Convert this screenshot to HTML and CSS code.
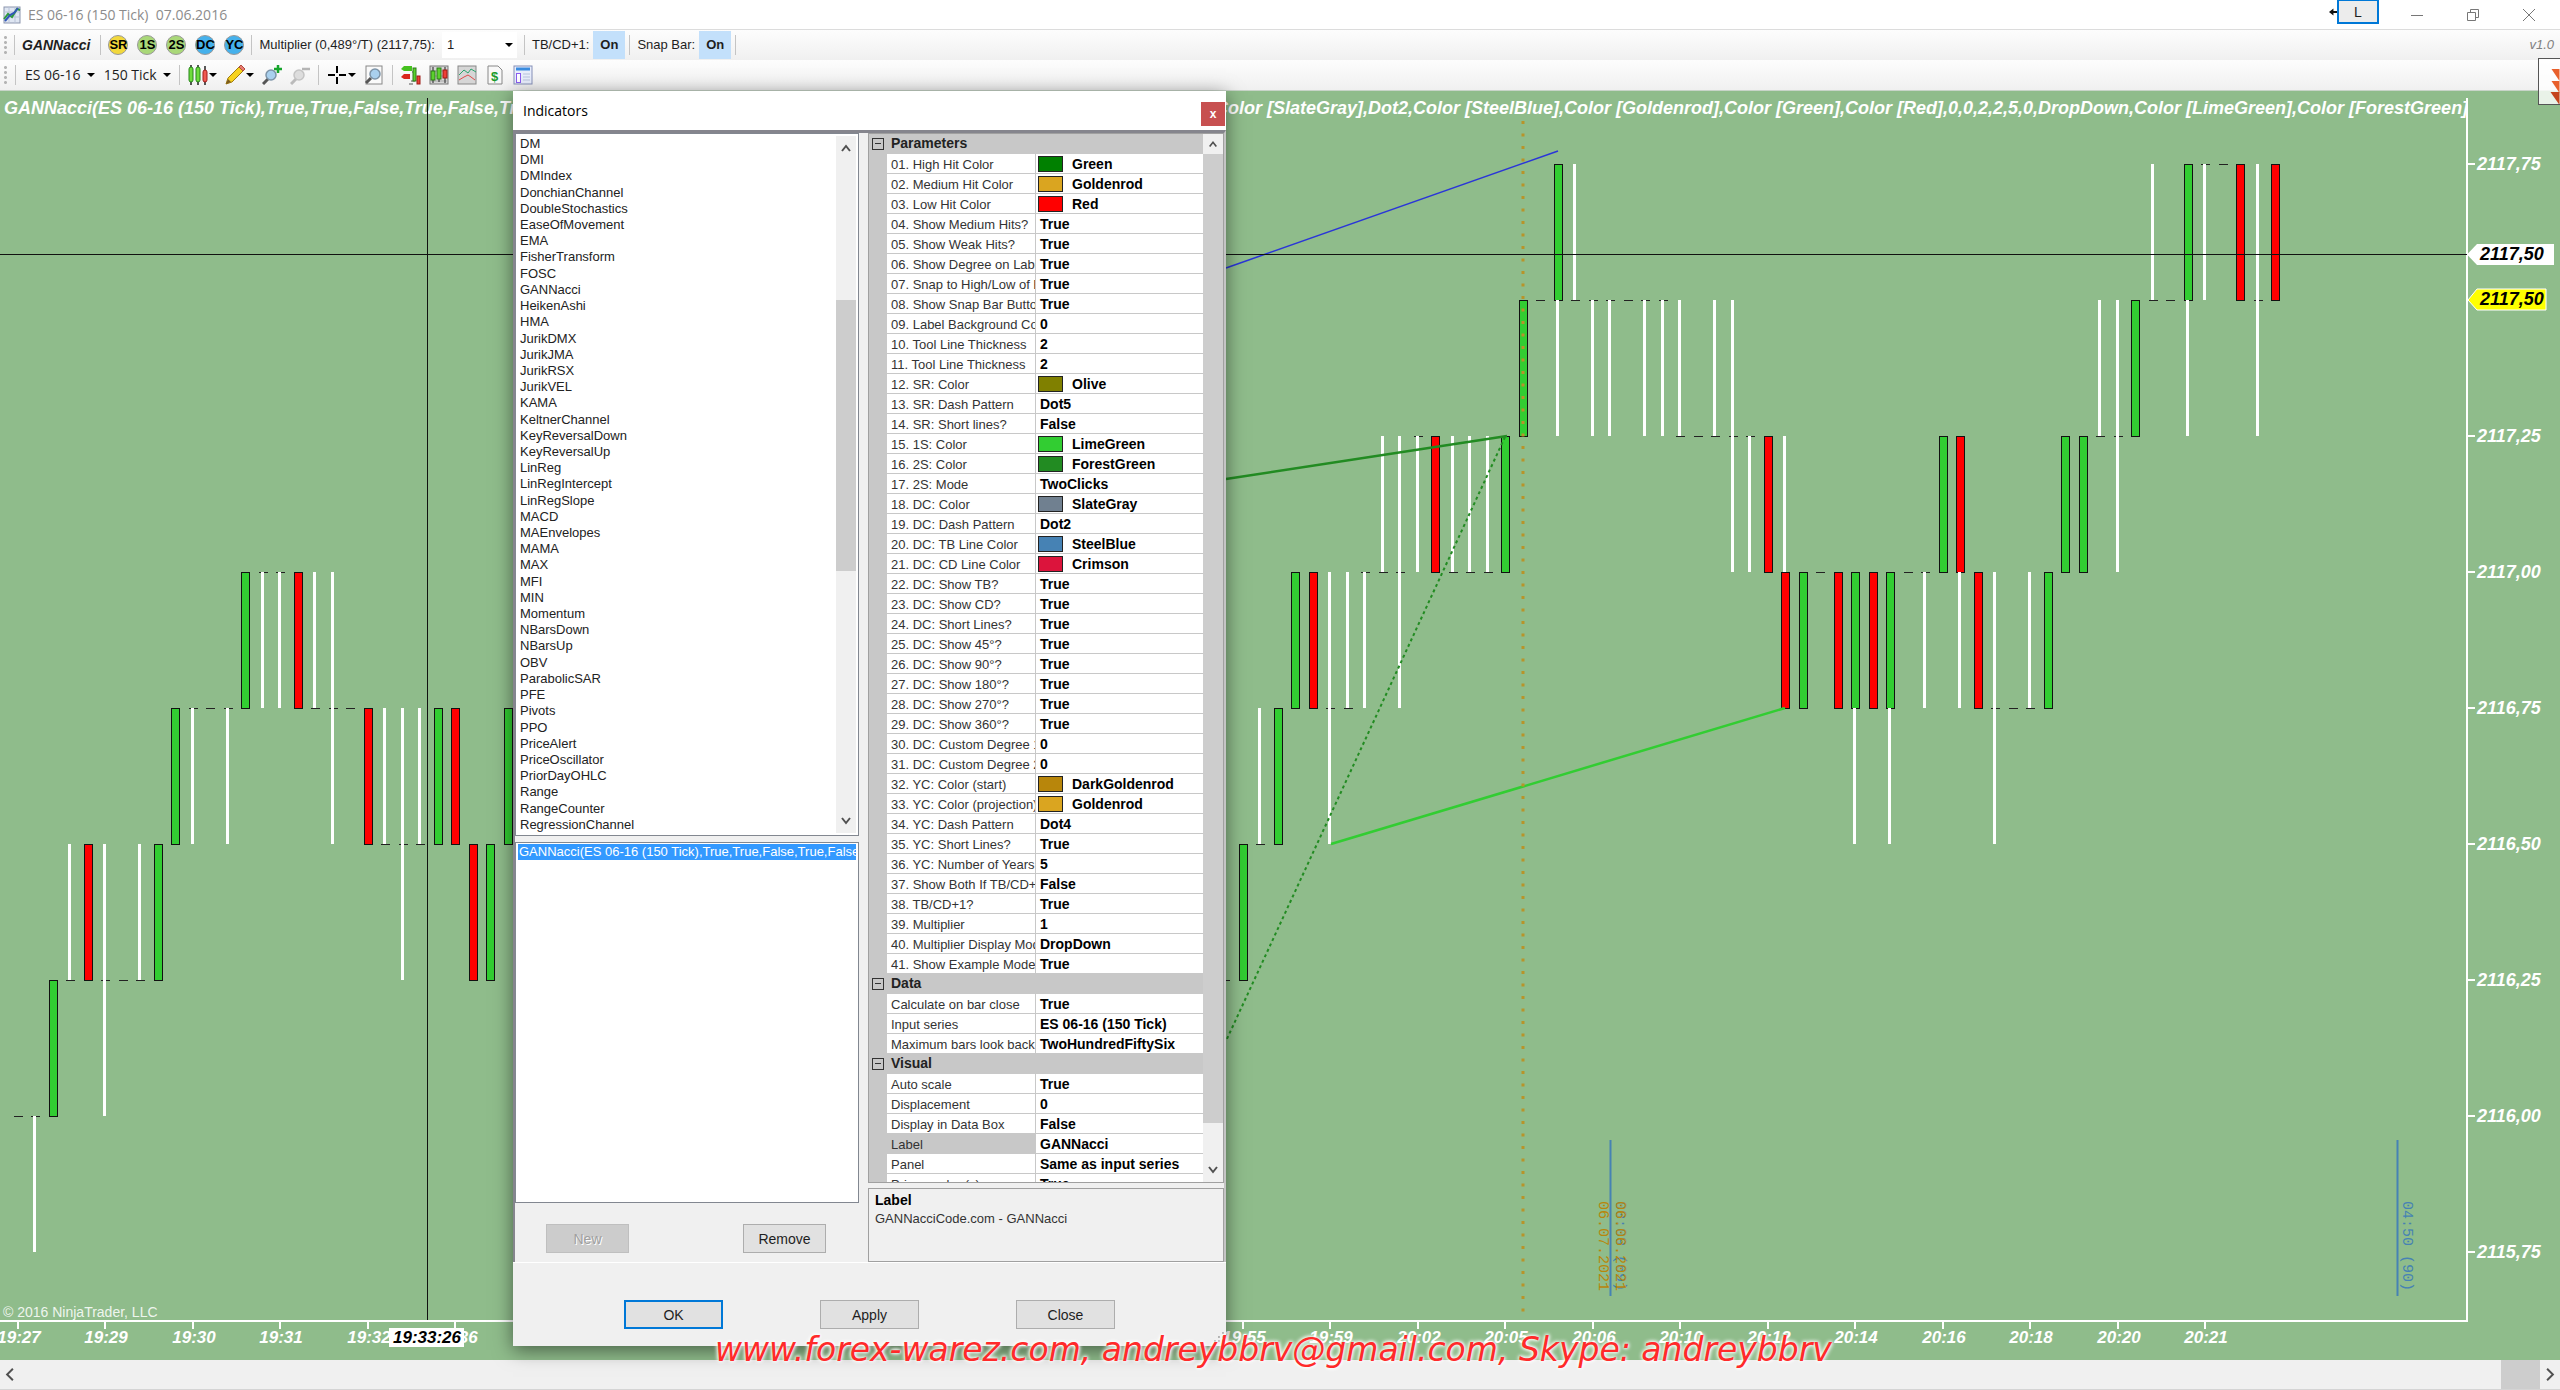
FILE: index.html
```html
<!DOCTYPE html>
<html lang="en">
<head>
<meta charset="utf-8">
<title>ES 06-16 (150 Tick) 07.06.2016</title>
<link rel="stylesheet" href="styles.css">
</head>
<body>
<header class="titlebar">
  <svg class="app-icon" viewBox="0 0 18 18"><rect x="1" y="1" width="16" height="16" fill="#dfe6f2" stroke="#8b95ad"/><path d="M1 6h16M1 11h16M6 1v16M12 1v16" stroke="#b9c3d8"/><path d="M1 13l4-5 4 3 5-8 3 1" fill="none" stroke="#2f9a3c" stroke-width="2"/><path d="M2 15l5-6 4-2 4-5" fill="none" stroke="#3157b8" stroke-width="2"/></svg>
  <h1 class="window-title">ES 06-16 (150 Tick)&nbsp; 07.06.2016</h1>
  <svg class="link-arrow" viewBox="0 0 9 10"><path d="M0 5l5-4v3h4v2H5v3z" fill="#111"/></svg>
  <button class="link-button" type="button">L</button>
  <div class="window-controls">
    <button type="button" aria-label="Minimize"><svg viewBox="0 0 14 14"><path d="M1 7.5h12" stroke="#777"/></svg></button>
    <button type="button" aria-label="Restore"><svg viewBox="0 0 14 14"><path d="M1.500 4.500h8v8h-8zM4.500 4.500v-3h8v8h-3" fill="none" stroke="#777"/></svg></button>
    <button type="button" aria-label="Close window"><svg viewBox="0 0 14 14"><path d="M1 1l12 12M13 1L1 13" stroke="#777"/></svg></button>
  </div>
</header>

<nav class="toolbar" aria-label="GANNacci">
  <span class="grip"></span><span class="sep"></span>
  <span class="brand">GANNacci</span>
  <span class="sep"></span>
  <div class="modes">
    <button class="mode yellow" type="button">SR</button>
    <button class="mode lime" type="button">1S</button>
    <button class="mode lime" type="button">2S</button>
    <button class="mode sky" type="button">DC</button>
    <button class="mode sky" type="button">YC</button>
  </div>
  <span class="sep"></span>
  <label for="multiplier">Multiplier (0,489°/T) (2117,75):</label>
  <span class="combo"><select id="multiplier"><option>1</option></select></span>
  <span class="sep"></span>
  <div class="setting"><span>TB/CD+1:</span><button class="toggle" type="button">On</button><span class="sep"></span></div>
  <div class="setting"><span>Snap Bar:</span><button class="toggle" type="button">On</button><span class="sep"></span></div>
  <span class="version">v1.0</span>
</nav>

<nav class="toolbar chart-tools" aria-label="Chart">
  <span class="grip"></span><span class="sep"></span>
  <button class="drop" type="button">ES 06-16</button>
  <button class="drop" type="button">150 Tick</button>
  <span class="sep"></span>
  <button class="drop tight" type="button" aria-label="Chart style"><svg viewBox="0 0 20 20"><path d="M3 0v20M10 0v20M17 1v19" stroke="#222" stroke-width="1.500"/><rect x="1" y="2" width="4" height="15" rx="2" fill="#6fdc3c" stroke="#26851a"/><rect x="8" y="2" width="4" height="15" rx="2" fill="#6fdc3c" stroke="#26851a"/><rect x="15" y="5" width="4" height="12" rx="2" fill="#f05a50" stroke="#a31d1d"/></svg></button>
  <button class="drop tight" type="button" aria-label="Drawing tools"><svg viewBox="0 0 20 20"><path d="M1 19l2-6L14 2l4 4L7 17z" fill="#f7d21e" stroke="#a07d10"/><path d="M14 2l2-2 4 4-2 2z" fill="#e77b70" stroke="#b04a40"/><path d="M1 19l2-5 3 3z" fill="#7a5a20"/></svg></button>
  <button class="tool" type="button" aria-label="Zoom in"><svg viewBox="0 0 20 20"><path d="M1 19l5-5" stroke="#555" stroke-width="3"/><circle cx="9" cy="10" r="5" fill="#a9d0ee" stroke="#7d94a8" stroke-width="1.500"/><path d="M16 0v8M12 4h8" stroke="#16a52c" stroke-width="2.500"/></svg></button>
  <button class="tool" type="button" aria-label="Zoom out"><svg viewBox="0 0 20 20"><path d="M1 19l5-5" stroke="#bbb" stroke-width="3"/><circle cx="9" cy="10" r="5" fill="#ddd" stroke="#c4c4c4" stroke-width="1.500"/><path d="M12 4h8" stroke="#b5b5b5" stroke-width="2.500"/></svg></button>
  <span class="sep"></span>
  <button class="drop tight" type="button" aria-label="Crosshair"><svg viewBox="0 0 20 20"><path d="M10 1v7M10 12v7M1 10h7M12 10h7" stroke="#000" stroke-width="2"/></svg></button>
  <button class="tool" type="button" aria-label="Preview"><svg viewBox="0 0 20 20"><rect x="2" y="1" width="16" height="18" fill="#fafafa" stroke="#888"/><path d="M2 18l5-5" stroke="#555" stroke-width="3"/><circle cx="11" cy="9" r="5" fill="#a9d0ee" stroke="#7d94a8" stroke-width="1.500"/></svg></button>
  <span class="sep"></span>
  <button class="tool wide" type="button" aria-label="Chart trader"><svg viewBox="0 0 20 20"><path d="M0 4l3-3h8v5H3z" fill="#46c11f"/><path d="M0 12l3-3h6v5H3z" fill="#d9261c"/><path d="M11 7h2M10 16h4M8 19h4" stroke="#555"/><rect x="12" y="3" width="3" height="13" fill="#5bd12d" stroke="#2d7a18"/><rect x="16" y="11" width="3" height="8" fill="#ee4036" stroke="#9c1a14"/></svg></button>
  <button class="tool wide" type="button" aria-label="Data series"><svg viewBox="0 0 20 20"><rect x="1" y="1" width="18" height="18" fill="#d6d6d6" stroke="#777"/><path d="M1 6h18M1 11h18M1 16h18" stroke="#aaa"/><path d="M4 2v16M10 3v14M16 2v16" stroke="#222"/><rect x="2" y="6" width="4" height="9" fill="#5bd12d" stroke="#2d7a18"/><rect x="8" y="3" width="4" height="11" fill="#5bd12d" stroke="#2d7a18"/><rect x="14" y="5" width="4" height="8" fill="#ee4036" stroke="#9c1a14"/></svg></button>
  <button class="tool wide" type="button" aria-label="Indicators"><svg viewBox="0 0 20 20"><rect x="1" y="1" width="18" height="18" fill="#d6d6d6" stroke="#888"/><path d="M2 10l5-5 4 3 3-4 5 3" fill="none" stroke="#2aa36a"/><path d="M2 15l5-3 4-2 3 2 4 3" fill="none" stroke="#e04a4a"/></svg></button>
  <button class="tool wide" type="button" aria-label="Strategies"><svg viewBox="0 0 20 20"><path d="M3 1h10l4 4v14H3z" fill="#f8f8f8" stroke="#888"/><text x="6" y="16" class="dollar">$</text></svg></button>
  <button class="tool wide" type="button" aria-label="Properties"><svg viewBox="0 0 20 20"><rect x="1" y="1" width="18" height="18" fill="#e9eefc" stroke="#8590b8"/><path d="M3 4h14" stroke="#3b8de0" stroke-width="3"/><rect x="3.500" y="8.500" width="4" height="9" fill="#fff" stroke="#8a5cf0"/><path d="M10 9h7M10 12h7M10 15h7" stroke="#b9c4dd"/></svg></button>
</nav>

<main class="chart-area">
  <svg class="chart" id="chart" viewBox="0 91 2560 1269" preserveAspectRatio="xMinYMin meet"></svg>

  <section class="dialog" role="dialog" aria-labelledby="dialog-title">
    <header class="dialog-head">
      <h2 id="dialog-title">Indicators</h2>
      <button class="dialog-close" type="button">x</button>
    </header>
    <div class="dialog-body">
      <div class="pane-left">
        <div class="listbox available">
          <ul class="items" role="listbox" aria-label="Available indicators">
            <li>DM</li><li>DMI</li><li>DMIndex</li><li>DonchianChannel</li><li>DoubleStochastics</li><li>EaseOfMovement</li><li>EMA</li><li>FisherTransform</li><li>FOSC</li><li>GANNacci</li><li>HeikenAshi</li><li>HMA</li><li>JurikDMX</li><li>JurikJMA</li><li>JurikRSX</li><li>JurikVEL</li><li>KAMA</li><li>KeltnerChannel</li><li>KeyReversalDown</li><li>KeyReversalUp</li><li>LinReg</li><li>LinRegIntercept</li><li>LinRegSlope</li><li>MACD</li><li>MAEnvelopes</li><li>MAMA</li><li>MAX</li><li>MFI</li><li>MIN</li><li>Momentum</li><li>NBarsDown</li><li>NBarsUp</li><li>OBV</li><li>ParabolicSAR</li><li>PFE</li><li>Pivots</li><li>PPO</li><li>PriceAlert</li><li>PriceOscillator</li><li>PriorDayOHLC</li><li>Range</li><li>RangeCounter</li><li>RegressionChannel</li>
          </ul>
          <div class="vscroll list-scroll">
            <svg viewBox="0 0 20 24"><path d="M6 15l4-5 4 5" class="chev"/></svg>
            <span class="thumb"></span>
            <svg viewBox="0 0 20 24"><path d="M6 9l4 5 4-5" class="chev"/></svg>
          </div>
        </div>
        <div class="listbox applied">
          <div class="selected">GANNacci(ES 06-16 (150 Tick),True,True,False,True,False</div>
        </div>
        <div class="list-actions">
          <button class="btn" type="button" disabled>New</button>
          <button class="btn" type="button">Remove</button>
        </div>
      </div>
      <div class="pane-right">
        <div class="propgrid">
          <div class="proprows">
          <table class="props">
            <colgroup><col class="c-gutter"><col class="c-name"><col></colgroup>
            <tbody>
            <tr class="cat"><td><i class="box"></i></td><th colspan="2">Parameters</th></tr>
            <tr><td></td><th>01. High Hit Color</th><td><i class="sw green"></i>Green</td></tr>
            <tr><td></td><th>02. Medium Hit Color</th><td><i class="sw goldenrod"></i>Goldenrod</td></tr>
            <tr><td></td><th>03. Low Hit Color</th><td><i class="sw red"></i>Red</td></tr>
            <tr><td></td><th>04. Show Medium Hits?</th><td>True</td></tr>
            <tr><td></td><th>05. Show Weak Hits?</th><td>True</td></tr>
            <tr><td></td><th>06. Show Degree on Label?</th><td>True</td></tr>
            <tr><td></td><th>07. Snap to High/Low of Bar</th><td>True</td></tr>
            <tr><td></td><th>08. Show Snap Bar Button?</th><td>True</td></tr>
            <tr><td></td><th>09. Label Background Color</th><td>0</td></tr>
            <tr><td></td><th>10. Tool Line Thickness</th><td>2</td></tr>
            <tr><td></td><th>11. Tool Line Thickness</th><td>2</td></tr>
            <tr><td></td><th>12. SR: Color</th><td><i class="sw olive"></i>Olive</td></tr>
            <tr><td></td><th>13. SR: Dash Pattern</th><td>Dot5</td></tr>
            <tr><td></td><th>14. SR: Short lines?</th><td>False</td></tr>
            <tr><td></td><th>15. 1S: Color</th><td><i class="sw limegreen"></i>LimeGreen</td></tr>
            <tr><td></td><th>16. 2S: Color</th><td><i class="sw forestgreen"></i>ForestGreen</td></tr>
            <tr><td></td><th>17. 2S: Mode</th><td>TwoClicks</td></tr>
            <tr><td></td><th>18. DC: Color</th><td><i class="sw slategray"></i>SlateGray</td></tr>
            <tr><td></td><th>19. DC: Dash Pattern</th><td>Dot2</td></tr>
            <tr><td></td><th>20. DC: TB Line Color</th><td><i class="sw steelblue"></i>SteelBlue</td></tr>
            <tr><td></td><th>21. DC: CD Line Color</th><td><i class="sw crimson"></i>Crimson</td></tr>
            <tr><td></td><th>22. DC: Show TB?</th><td>True</td></tr>
            <tr><td></td><th>23. DC: Show CD?</th><td>True</td></tr>
            <tr><td></td><th>24. DC: Short Lines?</th><td>True</td></tr>
            <tr><td></td><th>25. DC: Show 45°?</th><td>True</td></tr>
            <tr><td></td><th>26. DC: Show 90°?</th><td>True</td></tr>
            <tr><td></td><th>27. DC: Show 180°?</th><td>True</td></tr>
            <tr><td></td><th>28. DC: Show 270°?</th><td>True</td></tr>
            <tr><td></td><th>29. DC: Show 360°?</th><td>True</td></tr>
            <tr><td></td><th>30. DC: Custom Degree 1</th><td>0</td></tr>
            <tr><td></td><th>31. DC: Custom Degree 2</th><td>0</td></tr>
            <tr><td></td><th>32. YC: Color (start)</th><td><i class="sw darkgoldenrod"></i>DarkGoldenrod</td></tr>
            <tr><td></td><th>33. YC: Color (projection)</th><td><i class="sw goldenrod"></i>Goldenrod</td></tr>
            <tr><td></td><th>34. YC: Dash Pattern</th><td>Dot4</td></tr>
            <tr><td></td><th>35. YC: Short Lines?</th><td>True</td></tr>
            <tr><td></td><th>36. YC: Number of Years</th><td>5</td></tr>
            <tr><td></td><th>37. Show Both If TB/CD+1</th><td>False</td></tr>
            <tr><td></td><th>38. TB/CD+1?</th><td>True</td></tr>
            <tr><td></td><th>39. Multiplier</th><td>1</td></tr>
            <tr><td></td><th>40. Multiplier Display Mode</th><td>DropDown</td></tr>
            <tr><td></td><th>41. Show Example Mode</th><td>True</td></tr>
            <tr class="cat"><td><i class="box"></i></td><th colspan="2">Data</th></tr>
            <tr><td></td><th>Calculate on bar close</th><td>True</td></tr>
            <tr><td></td><th>Input series</th><td>ES 06-16 (150 Tick)</td></tr>
            <tr><td></td><th>Maximum bars look back</th><td>TwoHundredFiftySix</td></tr>
            <tr class="cat"><td><i class="box"></i></td><th colspan="2">Visual</th></tr>
            <tr><td></td><th>Auto scale</th><td>True</td></tr>
            <tr><td></td><th>Displacement</th><td>0</td></tr>
            <tr><td></td><th>Display in Data Box</th><td>False</td></tr>
            <tr class="current"><td></td><th>Label</th><td>GANNacci</td></tr>
            <tr><td></td><th>Panel</th><td>Same as input series</td></tr>
            <tr><td></td><th>Price marker(s)</th><td>True</td></tr>
            </tbody>
          </table>
          </div>
          <div class="vscroll prop-scroll">
            <svg viewBox="0 0 20 24"><path d="M6 15l4-5 4 5" class="chev"/></svg>
            <span class="thumb"></span>
            <svg viewBox="0 0 20 24"><path d="M6 9l4 5 4-5" class="chev"/></svg>
          </div>
        </div>
        <div class="help"><strong>Label</strong><p>GANNacciCode.com - GANNacci</p></div>
      </div>
    </div>
    <footer class="dialog-foot">
      <button class="btn primary" type="button">OK</button>
      <button class="btn" type="button">Apply</button>
      <button class="btn" type="button">Close</button>
      <svg class="resize" viewBox="0 0 12 12"><path d="M9 1h2M9 5h2M5 5h2M9 9h2M5 9h2M1 9h2" stroke="#b0b0b0" stroke-width="2"/></svg>
    </footer>
  </section>
  <aside class="side-tab"><svg viewBox="0 0 20 45"><path d="M12 10h8v12z" fill="#e8602c"/><path d="M12 22h8v12z" fill="#e8602c"/><path d="M11 33h9v13z" fill="#c4441c"/></svg></aside>
  <p class="watermark">www.forex-warez.com, andreybbrv@gmail.com, Skype: andreybbrv</p>
</main>

<footer class="hscroll">
  <svg viewBox="0 0 20 30"><path d="M13 9l-6 6 6 6" class="chev"/></svg>
  <span class="thumb"></span>
  <svg viewBox="0 0 20 30"><path d="M7 9l6 6-6 6" class="chev"/></svg>
</footer>
<script src="chart.js"></script>
</body>
</html>
```
FILE: styles.css
```css
* { box-sizing: border-box; }
body {
  margin: 0;
  height: 100vh;
  display: grid;
  grid-template-rows: 30px 30px 31px minmax(0, 1fr) 30px;
  overflow: hidden;
  background: #8fbc8b;
  color: #1e1e1e;
  font: 15px/20px "Liberation Sans", Arial, sans-serif;
}
button { font: inherit; color: inherit; padding: 0; border: 0; background: none; }
h1, h2, p, ul { margin: 0; padding: 0; }
svg { display: block; }
.chev { fill: none; stroke: #505050; stroke-width: 2; }

/* window title */
.titlebar { display: flex; align-items: center; background: #fff; border-bottom: 1px solid #dcdcdc; padding-left: 3px; }
.app-icon { width: 18px; height: 18px; margin-right: 7px; }
.window-title { flex: 1; font: 14px/20px "Open Sans", sans-serif; color: #8c8c8c; }
.link-arrow { width: 8px; height: 10px; align-self: flex-start; margin-top: 7px; }
.link-button { width: 42px; height: 24px; align-self: flex-start; border: 2px solid #0078d7; border-top-width: 1px; background: #ececec; font-size: 14px; }
.window-controls { display: flex; gap: 42px; padding: 0 24px 0 31px; }
.window-controls button, .window-controls svg { width: 14px; height: 14px; }

/* toolbars */
.toolbar { display: flex; align-items: center; gap: 7px; padding-left: 4px; background: linear-gradient(#fdfdfd, #f0f0f0); white-space: nowrap; font-size: 13px; }
.chart-tools { border-bottom: 1px solid #c8d4c8; font: 14px/20px "Open Sans", sans-serif; gap: 8px; }
.grip { width: 3px; height: 20px; background: radial-gradient(circle, #b4b4b4 1px, transparent 2px) 0 0 / 3px 5px; }
.sep { width: 1px; height: 20px; background: #c4c4c4; }
.brand { font-size: 14px; font-weight: bold; font-style: italic; padding-right: 3px; }
.modes { display: flex; gap: 9px; }
.mode { width: 20px; height: 20px; border-radius: 50%; border: 1px solid #999; font: bold 13px/18px "Liberation Sans", sans-serif; display: flex; justify-content: center; color: #000; }
.mode.yellow { background: #f2d83c; }
.mode.lime { background: #a9d878; }
.mode.sky { background: #45b1ec; }
.combo { position: relative; background: #fff; width: 75px; height: 26px; }
.combo select { appearance: none; width: 100%; height: 100%; border: 0; background: none; font: inherit; padding: 0 5px; color: #1e1e1e; }
.combo::after, .drop::after { content: ""; border: 4px solid transparent; border-top-color: #000; border-bottom-width: 0; }
.combo::after { position: absolute; right: 4px; top: 11px; }
.setting { display: flex; align-items: center; gap: 4px; }
.toggle { width: 32px; height: 28px; background: #c3e0fb; font-weight: bold; }
.version { margin-left: auto; padding-right: 6px; font-style: italic; color: #808080; }
.drop { display: flex; align-items: center; gap: 6px; padding-left: 1px; }
.drop.tight { gap: 1px; padding: 0; }
.toolbar svg { width: 20px; height: 20px; }
.tool.wide { width: 20px; }
.dollar { font: bold 13px "Liberation Sans", sans-serif; fill: #199a2c; }

/* chart */
.chart-area { position: relative; min-height: 0; }
.chart { width: 100%; height: 100%; background: #8fbc8b; }
.body { stroke: #111; stroke-width: 1; shape-rendering: crispEdges; }
.up { fill: #32cd32; }
.down { fill: #f00; }
.dash { stroke: #222; stroke-width: 1; fill: none; shape-rendering: crispEdges; }
.wick { stroke: #fff; stroke-width: 3; fill: none; shape-rendering: crispEdges; }
.axis { stroke: #fff; stroke-width: 2; fill: none; }
.cross { stroke: #111; stroke-width: 1; shape-rendering: crispEdges; }
.label { font: italic bold 17px "Liberation Sans", Arial, sans-serif; fill: #fff; }
.label.name { font-size: 18px; }
.label.dark { fill: #000; }
.mid { text-anchor: middle; }
.copy { font: 14px "Liberation Sans", Arial, sans-serif; fill: #eef5ee; }
.mono { font: 15px "Liberation Mono", "Courier New", monospace; }
.steel { fill: #4682b4; stroke: none; }
.gold { fill: #b8860b; stroke: none; }

/* indicators dialog */
.dialog { position: absolute; left: 513px; top: 0; width: 713px; height: 1255px; display: flex; flex-direction: column; background: #f0f0f0; box-shadow: 0 4px 18px rgba(0, 0, 0, .5); font-size: 13px; line-height: 16px; }
.dialog-head { height: 39px; background: #fff; display: flex; justify-content: space-between; align-items: center; padding: 0 1px 0 10px; }
.dialog-head h2 { font: 14px/20px "Open Sans", sans-serif; color: #000; }
.dialog-close { width: 24px; height: 24px; margin-top: 7px; background: #c75050; color: #fff; font: bold 12px/20px "Liberation Sans", sans-serif; }
.dialog-body { flex: 1; min-height: 0; display: flex; gap: 9px; border: solid #85858d; border-width: 3px 2px 0 2px; border-right-color: #c4c4c4; }
.pane-left { width: 344px; display: flex; flex-direction: column; }
.pane-right { flex: 1; min-width: 0; display: flex; flex-direction: column; gap: 5px; }
.listbox { background: #fff; border: 1px solid #828790; padding: 2px; display: flex; }
.available { height: 703px; margin-bottom: 6px; }
.applied { height: 361px; padding-top: 1px; }
.items { flex: 1; list-style: none; display: grid; grid-auto-rows: 1fr; padding-left: 2px; color: #222; }
.selected { width: 100%; height: 16px; padding-left: 1px; background: #3399ff; color: #fff; overflow: hidden; white-space: nowrap; }
.vscroll { width: 20px; display: flex; flex-direction: column; background: #f0f0f0; }
.vscroll svg { width: 20px; height: 24px; }
.vscroll .thumb { background: #cdcdcd; }
.list-scroll { justify-content: flex-end; }
.list-scroll svg:first-child { margin-bottom: auto; }
.list-scroll .thumb { height: 271px; margin-bottom: 238px; }
.prop-scroll { justify-content: space-between; }
.prop-scroll svg:first-child { height: 20px; }
.prop-scroll .thumb { height: 969px; margin-bottom: auto; }
.list-actions { display: flex; justify-content: space-between; padding: 21px 33px 0 31px; }
.btn { width: 83px; height: 29px; background: #e1e1e1; border: 1px solid #adadad; font-size: 14px; }
.btn:disabled { background: #cccccc; border-color: #bfbfbf; color: #a0a0a0; text-shadow: 1px 1px #fff; }
.propgrid { flex: 1; min-height: 0; display: flex; border: 1px solid #a0a0a0; background: #f0f0f0; }
.proprows { flex: 1; min-width: 0; overflow: hidden; }
.props { width: 100%; table-layout: fixed; border-collapse: separate; border-spacing: 0; background: #fff; }
.c-gutter { width: 18px; }
.c-name { width: 149px; }
.props tr { height: 20px; }
.props th, .props td { height: 20px; padding: 2px 0 0 4px; border-bottom: 1px solid #c8c8c8; line-height: 17px; text-align: left; white-space: nowrap; overflow: hidden; }
.props th { font-weight: normal; color: #333; border-right: 1px solid #c8c8c8; }
.props td { font-weight: bold; font-size: 14px; color: #000; }
.props td:first-child { background: #c8c8c8; border-color: #c8c8c8; padding: 0; }
.props .cat th { background: #c8c8c8; font-weight: bold; font-size: 14px; color: #222; padding-top: 0; }
.props .current th { background: #c8c8c8; }
.box { display: block; width: 12px; height: 12px; margin-left: 3px; border: 1px solid #333; background: linear-gradient(#333, #333) center / 6px 1px no-repeat; }
.sw { display: inline-block; width: 25px; height: 16px; margin: 0 9px 0 -2px; border: 1px solid #222; vertical-align: top; }
.sw.green { background: green; }
.sw.goldenrod { background: goldenrod; }
.sw.red { background: red; }
.sw.olive { background: olive; }
.sw.limegreen { background: limegreen; }
.sw.forestgreen { background: forestgreen; }
.sw.slategray { background: slategray; }
.sw.steelblue { background: steelblue; }
.sw.crimson { background: crimson; }
.sw.darkgoldenrod { background: darkgoldenrod; }
.help { height: 74px; border: 1px solid #a0a0a0; padding: 2px 6px; line-height: 18px; color: #333; }
.help strong { color: #000; font-size: 14px; }
.dialog-foot { position: relative; height: 84px; display: flex; gap: 97px; padding: 37px 0 0 111px; border-top: 1px solid #fff; }
.dialog-foot .btn { width: 99px; }
.dialog-foot .primary { border: 2px solid #0078d7; }
.resize { position: absolute; right: 1px; bottom: 2px; width: 12px; height: 12px; }

/* overlays */
.side-tab { position: absolute; right: 0; top: -33px; width: 22px; height: 47px; border: 1px solid #555; border-right: 0; background: rgba(255, 255, 255, .8); }
.side-tab svg { width: 21px; height: 45px; }
.watermark { position: absolute; left: 715px; bottom: -8px; font: italic 33px/36px "DejaVu Sans", cursive; color: #ff2a2a; white-space: nowrap; text-shadow: 0 0 3px #fff, 0 0 4px #fff, 0 0 5px #fff; z-index: 2; }

/* bottom scroll bar */
.hscroll { display: flex; background: #f0f0f0; border-bottom: 1px solid #d4d4d4; }
.hscroll svg { width: 20px; height: 29px; }
.hscroll .thumb { width: 39px; margin-left: auto; background: #cdcdcd; }
```
FILE: chart.js
```js
// Price rows, top to bottom, one letter per 0,25 step.
const LEVELS = { A: 164, B: 300, C: 436, D: 572, E: 708, F: 844, G: 980, H: 1116, I: 1252 };
const PRICES = { A: '2117,75', C: '2117,25', D: '2117,00', E: '2116,75', F: '2116,50', G: '2116,25', H: '2116,00', I: '2115,75' };

// Each bar: index, then u/d + range for a body, w + range for a wick, - + level for a flat open/close.
const BARS = `0 -H|1 -H wHI|2 uGH|3 -G wFG|4 dFG|5 -G wFH|6 -G|7 -G wFG|8 uFG|9 uEF|10 -E wEF|11 -E|12 -E wEF|13 uDE
14 -D wDE|15 -D wDE|16 dDE|17 -E wDE|18 -E wDF|19 -E|20 dEF|21 -F wEF|22 -F wEG|23 -F wEF|24 uEF|25 dEF|26 dFG|27 uFG|28 uEF
69 -G|70 uFG|71 -F wEF|72 uEF|73 uDE|74 dDE|75 -E wDF|76 -E wDE|77 -D wDE|78 -D wCD|79 -D wCE|80 -C wCD|81 dCD|82 -D wCD
83 -D wCD|84 -D wCD|85 uCD|86 uBC|87 -B|88 uAB wBC|89 -B wAB|90 -B wBC|91 -B wBC|92 -B|93 -B wBC|94 -B wBC|95 -C wBC
96 -C|97 -C wBC|98 -C wBD|99 -C wCD|100 dCD|101 dDE wCD|102 uDE|103 -D|104 dDE|105 uDE wEF|106 dDE|107 uDE wEF|108 -D
109 -D wDE|110 uCD|111 dCD wDE|112 dDE|113 -E wDF|114 -E|115 -E wDE|116 uDE|117 uCD|118 uCD|119 -C wBC|120 -C wBD|121 uBC
122 -B wAB|123 -B|124 uAB wBC|125 -A wAB|126 -A|127 dAB|128 -B wAC|129 dAB`;

const TIMES = { 0: '19:27', 5: '19:29', 10: '19:30', 15: '19:31', 20: '19:32', 25: '19:36', 70: '19:55', 75: '19:59', 80: '20:02',
  85: '20:05', 90: '20:06', 95: '20:10', 100: '20:12', 105: '20:14', 110: '20:16', 115: '20:18', 120: '20:20', 125: '20:21' };

const barX = i => Math.floor(18 + i * 17.5);
let up = '', down = '', dash = '', wick = '';
for (const bar of BARS.split(/[|\n]/)) {
  const [index, ...marks] = bar.trim().split(' ');
  const x = barX(+index);
  for (const mark of marks) {
    const top = LEVELS[mark[1]];
    const low = LEVELS[mark[2]];
    if (mark[0] === '-') dash += `M${x - 4} ${top}.5h9`;
    if (mark[0] === 'w') wick += `M${x - 1}.5 ${top}V${low}`;
    const box = `M${x - 4}.5 ${top}.5h8V${low}.5h-8z`;
    if (mark[0] === 'u') up += box;
    if (mark[0] === 'd') down += box;
  }
}

let axis = 'M2467 98V1321H0';
let labels = '';
for (const [key, price] of Object.entries(PRICES)) {
  axis += `M2467 ${LEVELS[key]}h8`;
  labels += `<text class="label name" x="2477" y="${LEVELS[key] + 6}">${price}</text>`;
}
for (const [index, time] of Object.entries(TIMES)) {
  axis += `M${barX(+index)} 1320v9`;
  labels += `<text class="label mid" x="${barX(+index) + 1}" y="1343">${time}</text>`;
}

document.getElementById('chart').innerHTML = `
  <path class="body up" d="${up}"/><path class="body down" d="${down}"/>
  <path class="dash" d="${dash}"/><path class="wick" d="${wick}"/>
  <path d="M1226 268L1558 151" stroke="#2a35d8" stroke-width="1.5"/>
  <path d="M1226 479L1507 436" stroke="#228b22" stroke-width="2.5"/>
  <path d="M1505 437L1226 1041" stroke="#228b22" stroke-width="2" stroke-dasharray="3 3"/>
  <path d="M1331 844L1785 708" stroke="#32cd32" stroke-width="2.5"/>
  <path d="M1523 121V1312" stroke="#b8942a" stroke-width="3" stroke-dasharray="3 9.5"/>
  <path d="M1610.5 1140V1296M2397.5 1140V1296" stroke="#4682b4" stroke-width="2"/>
  <text class="mono steel" transform="translate(2403 1201) rotate(90)">04:50 (90)</text>
  <text class="mono steel" transform="translate(1616 1201) rotate(90)">00:09 (69)</text>
  <text class="mono gold" transform="translate(1616 1201) rotate(90)">06.06.2021</text>
  <text class="mono gold" transform="translate(1599 1201) rotate(90)">06.07.2021</text>
  <text class="label name" x="4" y="114">GANNacci(ES 06-16 (150 Tick),True,True,False,True,False,True</text>
  <svg x="1215" y="91" width="1252" height="40"><text class="label name" x="0" y="23">Color [SlateGray],Dot2,Color [SteelBlue],Color [Goldenrod],Color [Green],Color [Red],0,0,2,2,5,0,DropDown,Color [LimeGreen],Color [ForestGreen],True</text></svg>
  <text class="copy" x="3" y="1317">© 2016 NinjaTrader, LLC</text>
  <path class="axis" d="${axis}"/>
  ${labels}
  <path class="cross" d="M0 254.5H2467M427.5 98V1320"/>
  <path d="M2467 254.500L2477 244H2554V265H2477z" fill="#fff"/>
  <text class="label name dark" x="2480" y="260">2117,50</text>
  <path d="M2468 300L2477 289H2546V310H2477z" fill="#ff0" stroke="#fff"/>
  <text class="label name dark" x="2480" y="305">2117,50</text>
  <rect x="389" y="1328" width="75" height="19" fill="#fff"/>
  <text class="label dark mid" x="427" y="1343">19:33:26</text>`;
```
